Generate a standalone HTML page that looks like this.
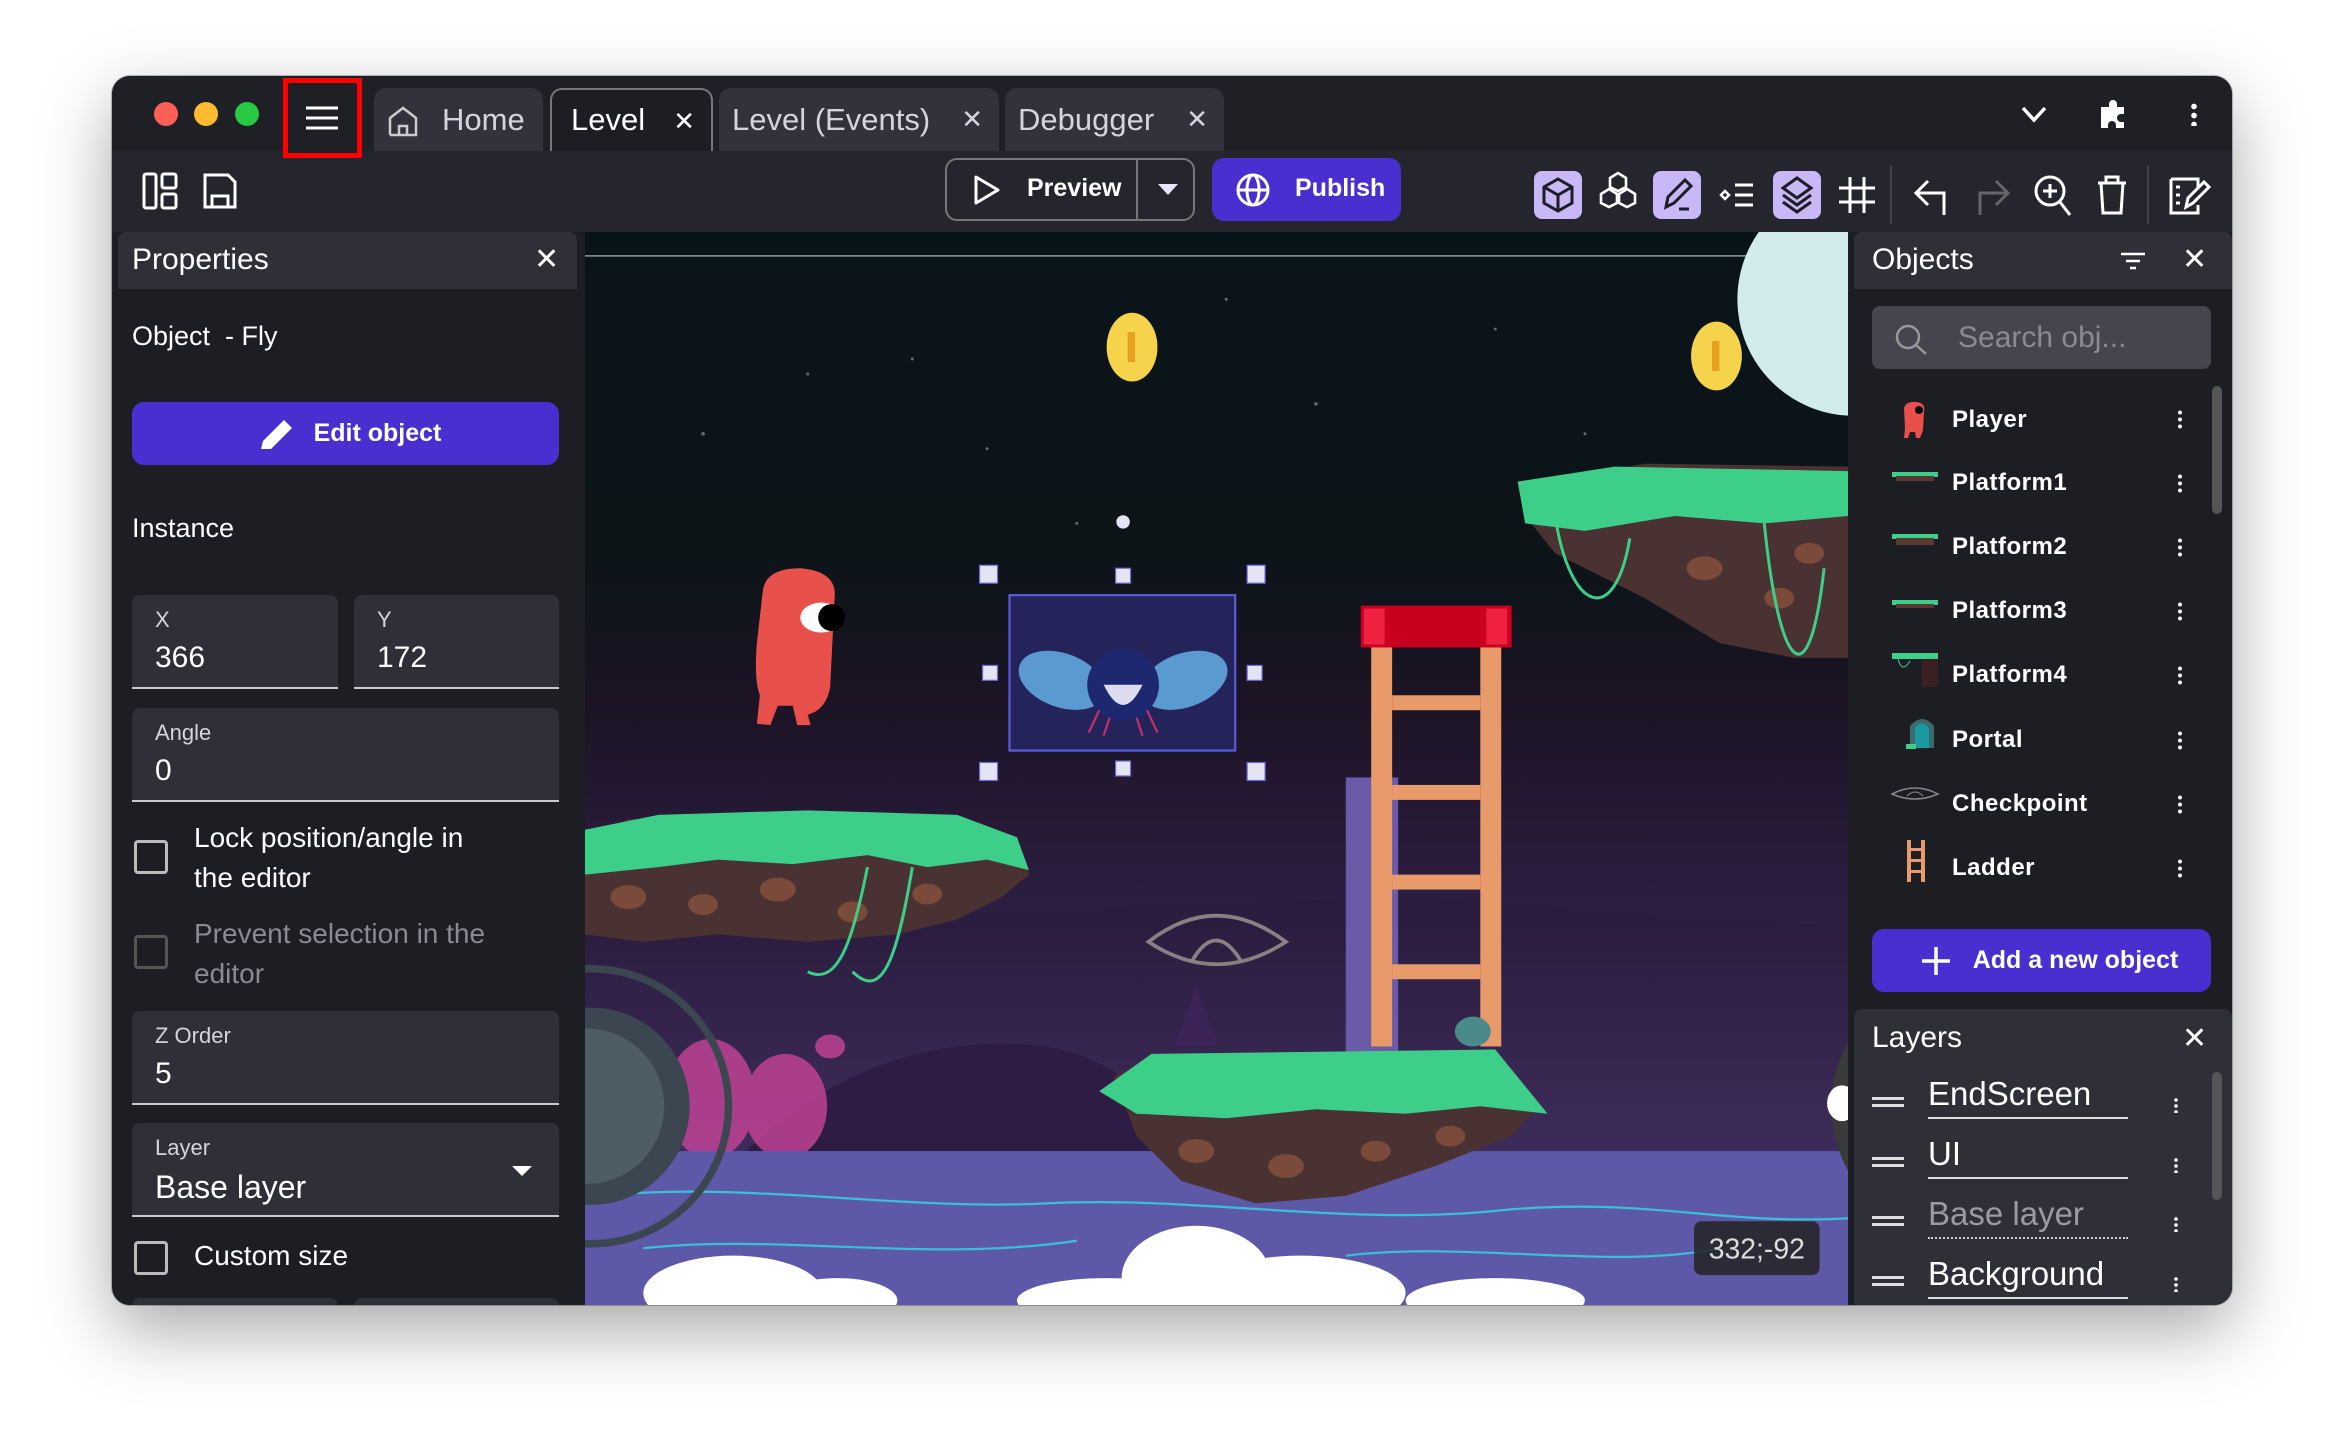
<!DOCTYPE html>
<html><head><meta charset="utf-8"><style>
*{box-sizing:border-box;margin:0;padding:0}
body{width:2344px;height:1454px;background:#fff;position:relative;overflow:hidden;font-family:"Liberation Sans",sans-serif;color:#fff}
.a{position:absolute}
.win{left:112px;top:76px;width:2120px;height:1229px;border-radius:18px;background:#1d1d24;overflow:hidden;box-shadow:0 25px 70px rgba(0,0,0,.35),0 0 0 1px rgba(0,0,0,.25)}
.tab{top:12px;height:63px;background:#32323c;border-radius:12px 12px 0 0;font-size:31px;color:#d4d4da;line-height:63px}
.tab .x{position:absolute;right:16px;top:0;font-size:26px}
.fld{background:#2f2f38;border-bottom:2px solid #c9c9cf;border-radius:8px 8px 0 0}
.fld .l{position:absolute;left:23px;top:12px;font-size:22px;color:#d4d4da}
.fld .v{position:absolute;left:23px;top:46px;font-size:30px}
.cb{width:34px;height:34px;border:3px solid #bbb;border-radius:4px}
.obj{left:98px;font-size:24px;font-weight:bold;letter-spacing:.5px}
.dots{width:4px;height:20px;background:radial-gradient(circle,#fff 1.8px,transparent 2.2px) 0 0/4px 7px repeat-y}
.btn{background:#4a2fd0;border-radius:12px;font-weight:bold;font-size:25px;text-align:center}
.lay{left:56px;font-size:33px;border-bottom:2px solid #ddd;width:200px;height:44px}
</style></head><body>
<div class="a win">
 <div class="a" style="left:0;top:0;width:2120px;height:75px;background:#1f1f26"></div>
 <div class="a" style="left:42px;top:26px;width:24px;height:24px;border-radius:50%;background:#fe5f57"></div>
 <div class="a" style="left:82px;top:26px;width:24px;height:24px;border-radius:50%;background:#febc2e"></div>
 <div class="a" style="left:123px;top:26px;width:24px;height:24px;border-radius:50%;background:#28c840"></div>
 <div class="a tab" style="left:262px;width:169px"><svg class="a" style="left:12px;top:17px" width="34" height="32"><path d="M4 30V13L17 3L30 13V30H4M13 30V21H21V30" stroke="#ccc" stroke-width="2.5" fill="none"/></svg><span style="position:absolute;left:68px">Home</span></div>
 <div class="a tab" style="left:438px;width:163px;background:#1d1d24;border:2px solid #777;border-bottom:none;color:#fff"><span style="position:absolute;left:19px;top:-2px">Level</span><span class="x">✕</span></div>
 <div class="a tab" style="left:607px;width:280px"><span style="position:absolute;left:13px">Level (Events)</span><span class="x">✕</span></div>
 <div class="a tab" style="left:893px;width:219px"><span style="position:absolute;left:13px">Debugger</span><span class="x">✕</span></div>
 <svg class="a" style="left:1907px;top:26px" width="30" height="24"><path d="M4 6L15 18L26 6" stroke="#fff" stroke-width="3.5" fill="none"/></svg>
 <svg class="a" style="left:1986px;top:20px" width="34" height="34"><path d="M3 11H11V8A4 4 0 0 1 19 8V11H26V18H23A4 4 0 0 0 23 26H26V32H18V29A4 4 0 0 0 10 29V32H3Z" fill="#fff"/></svg>
 <div class="a dots" style="left:2079px;top:26px;height:24px;width:6px;background:radial-gradient(circle,#fff 2.6px,transparent 3px) 0 0/6px 9px repeat-y"></div>
 <div class="a" style="left:0;top:75px;width:2120px;height:81px;background:#25252d"></div>
 <div class="a" style="left:171px;top:2px;width:79px;height:80px;border:5px solid #f00;background:#1f1f26;z-index:5"></div>
 <svg class="a" style="left:190px;top:24px;z-index:6" width="40" height="36"><path d="M4 8H36M4 18H36M4 28H36" stroke="#fff" stroke-width="3"/></svg>
 <svg class="a" style="left:30px;top:96px" width="36" height="38"><g stroke="#fff" stroke-width="3" fill="none"><rect x="2" y="2" width="12" height="34" rx="2"/><rect x="20" y="2" width="14" height="14" rx="2"/><rect x="20" y="22" width="14" height="14" rx="2"/></g></svg>
 <svg class="a" style="left:90px;top:96px" width="36" height="38"><path d="M3 3H26L33 10V35H3ZM10 35V24H26V35" stroke="#fff" stroke-width="3" fill="none"/></svg>
 <div class="a" style="left:833px;top:82px;width:250px;height:63px;border:2px solid #777;border-radius:12px"></div>
 <div class="a" style="left:1024px;top:82px;width:2px;height:63px;background:#777"></div>
 <svg class="a" style="left:860px;top:98px" width="30" height="32"><path d="M4 3L26 16L4 29Z" stroke="#fff" stroke-width="3" fill="none" stroke-linejoin="round"/></svg>
 <div class="a" style="left:915px;top:98px;font-size:25px;font-weight:bold">Preview</div>
 <svg class="a" style="left:1044px;top:105px" width="24" height="16"><path d="M2 3H22L12 14Z" fill="#e8e4ff"/></svg>
 <div class="a btn" style="left:1100px;top:82px;width:189px;height:63px"></div>
 <svg class="a" style="left:1123px;top:96px" width="36" height="36"><g stroke="#fff" stroke-width="3" fill="none"><circle cx="18" cy="18" r="15"/><ellipse cx="18" cy="18" rx="6" ry="15"/><path d="M3 18H33"/></g></svg>
 <div class="a" style="left:1183px;top:98px;font-size:25px;font-weight:bold">Publish</div>
 <div class="a" style="left:1422px;top:95px;width:48px;height:48px;border-radius:8px;background:#c8b8f8"></div>
 <div class="a" style="left:1541px;top:95px;width:48px;height:48px;border-radius:8px;background:#c8b8f8"></div>
 <div class="a" style="left:1661px;top:95px;width:48px;height:48px;border-radius:8px;background:#c8b8f8"></div>
 <svg class="a" style="left:1422px;top:95px" width="48" height="48"><path d="M24 8L38 16V32L24 40L10 32V16ZM10 16L24 24L38 16M24 24V40" stroke="#1d1d24" stroke-width="3" fill="none"/></svg>
 <svg class="a" style="left:1480px;top:93px" width="52" height="52"><g stroke="#fff" stroke-width="2.6" fill="none"><path d="M26 4L34 9V18L26 22L18 18V9Z"/><path d="M17 20L25 25V34L17 38L9 34V25Z"/><path d="M35 20L43 25V34L35 38L27 34V25Z"/></g></svg>
 <svg class="a" style="left:1541px;top:95px" width="48" height="48"><path d="M13 36L15 26L32 9L38 15L21 32ZM26 38H36" stroke="#1d1d24" stroke-width="3" fill="none"/></svg>
 <svg class="a" style="left:1601px;top:95px" width="48" height="48"><path d="M8 24L12 20L16 24L12 28Z" stroke="#fff" stroke-width="2.5" fill="none"/><path d="M22 14H40M22 24H40M22 34H40" stroke="#fff" stroke-width="3"/></svg>
 <svg class="a" style="left:1661px;top:95px" width="48" height="48"><path d="M24 7L38 17L24 27L10 17ZM10 24L24 34L38 24M10 31L24 41L38 31" stroke="#1d1d24" stroke-width="3" fill="none"/></svg>
 <svg class="a" style="left:1721px;top:95px" width="48" height="48"><path d="M17 6V42M31 6V42M6 17H42M6 31H42" stroke="#fff" stroke-width="3"/></svg>
 <div class="a" style="left:1778px;top:90px;width:2px;height:58px;background:#444"></div>
 <svg class="a" style="left:1798px;top:95px" width="44" height="48"><path d="M34 44V22H8M18 10L6 22L18 34" stroke="#fff" stroke-width="3" fill="none"/></svg>
 <svg class="a" style="left:1858px;top:95px" width="44" height="48"><path d="M10 44V22H36M26 10L38 22L26 34" stroke="#666" stroke-width="3" fill="none"/></svg>
 <svg class="a" style="left:1918px;top:95px" width="44" height="48"><g stroke="#fff" stroke-width="3" fill="none"><circle cx="20" cy="20" r="14"/><path d="M30 31L40 44M20 13V27M13 20H27"/></g></svg>
 <svg class="a" style="left:1980px;top:95px" width="40" height="48"><path d="M6 12H34M14 12V6H26V12M9 12L11 42H29L31 12" stroke="#fff" stroke-width="3" fill="none"/></svg>
 <div class="a" style="left:2035px;top:90px;width:2px;height:58px;background:#444"></div>
 <svg class="a" style="left:2054px;top:95px" width="46" height="48"><path d="M5 8H32V18M5 8V42H32V34M10 16H14M10 24H14M10 32H14M20 36L22 27L38 11L43 16L27 32Z" stroke="#fff" stroke-width="3" fill="none"/></svg>

 <div class="a" style="left:6px;top:156px;width:459px;height:1073px;background:#1d1d24"></div>
 <div class="a" style="left:6px;top:156px;width:459px;height:57px;background:#2f2f38;border-radius:8px 8px 0 0"></div>
 <div class="a" style="left:20px;top:167px;font-size:30px">Properties</div>
 <div class="a" style="left:422px;top:166px;font-size:30px">✕</div>
 <div class="a" style="left:20px;top:245px;font-size:27px">Object &nbsp;- Fly</div>
 <div class="a btn" style="left:20px;top:326px;width:427px;height:63px;line-height:63px"><span style="margin-left:64px">Edit object</span></div>
 <svg class="a" style="left:145px;top:340px" width="40" height="36"><path d="M4 33L6 25L27 4L35 12L14 33Z" fill="#fff"/></svg>
 <div class="a" style="left:20px;top:437px;font-size:27px">Instance</div>
 <div class="a fld" style="left:20px;top:519px;width:206px;height:94px"><span class="l">X</span><span class="v">366</span></div>
 <div class="a fld" style="left:242px;top:519px;width:205px;height:94px"><span class="l">Y</span><span class="v">172</span></div>
 <div class="a fld" style="left:20px;top:632px;width:427px;height:94px"><span class="l">Angle</span><span class="v">0</span></div>
 <div class="a cb" style="left:22px;top:764px"></div>
 <div class="a" style="left:82px;top:742px;font-size:28px;line-height:40px">Lock position/angle in<br>the editor</div>
 <div class="a cb" style="left:22px;top:859px;border-color:#555"></div>
 <div class="a" style="left:82px;top:838px;font-size:28px;line-height:40px;color:#8a8a94">Prevent selection in the<br>editor</div>
 <div class="a fld" style="left:20px;top:935px;width:427px;height:94px"><span class="l">Z Order</span><span class="v">5</span></div>
 <div class="a fld" style="left:20px;top:1047px;width:427px;height:94px"><span class="l">Layer</span><span class="v" style="font-size:32px">Base layer</span></div>
 <svg class="a" style="left:398px;top:1088px" width="24" height="14"><path d="M2 2H22L12 12Z" fill="#fff"/></svg>
 <div class="a cb" style="left:22px;top:1165px"></div>
 <div class="a" style="left:82px;top:1164px;font-size:28px">Custom size</div>
 <div class="a fld" style="left:20px;top:1222px;width:206px;height:30px"></div>
 <div class="a fld" style="left:242px;top:1222px;width:205px;height:30px"></div>

 <svg class="a" style="left:473px;top:156px" width="1263" height="1073" viewBox="391 155 845 718" preserveAspectRatio="none">
  <defs><linearGradient id="bg" x1="0" y1="0" x2="0" y2="1"><stop offset="0" stop-color="#09141a"/><stop offset=".3" stop-color="#0c1418"/><stop offset=".45" stop-color="#1d1426"/><stop offset=".65" stop-color="#2e1f44"/><stop offset=".82" stop-color="#4c3870"/><stop offset="1" stop-color="#5e4a8e"/></linearGradient></defs>
  <rect x="391" y="155" width="845" height="718" fill="url(#bg)"/>
  <g fill="#9aa" opacity=".6"><circle cx="470" cy="290" r="1.2"/><circle cx="540" cy="250" r="1"/><circle cx="610" cy="240" r="1"/><circle cx="880" cy="270" r="1.2"/><circle cx="1060" cy="290" r="1"/><circle cx="660" cy="300" r="1"/><circle cx="720" cy="350" r="1"/><circle cx="1000" cy="220" r="1"/><circle cx="820" cy="200" r="1"/></g>
  <line x1="391" y1="171" x2="1236" y2="171" stroke="#8a9a9a" stroke-width="1"/>
  <circle cx="1240" cy="200" r="78" fill="#d2ecee"/>
  <ellipse cx="757" cy="232" rx="17" ry="23" fill="#f5d34a"/><rect x="754" y="222" width="5" height="20" fill="#e8a020"/>
  <ellipse cx="1148" cy="238" rx="17" ry="23" fill="#f5d34a"/><rect x="1145" y="228" width="5" height="20" fill="#e8a020"/>
  <path d="M390 620L940 600L1236 620V873H390Z" fill="#2a1c3c" opacity=".5"/>
  <rect x="900" y="520" width="35" height="190" fill="#6a5aa8"/>
  <path d="M480 790C540 720 620 690 700 700C760 710 790 760 840 790Z" fill="#2e1c44"/>
  <path d="M785 700L800 660L815 700Z" fill="#3c2458"/>
  <g fill="#c8449a" opacity=".8"><ellipse cx="475" cy="735" rx="30" ry="40"/><ellipse cx="525" cy="740" rx="28" ry="35"/><ellipse cx="555" cy="700" rx="10" ry="8"/></g>
  <rect x="390" y="770" width="846" height="103" fill="#5e58a8"/>
  <g stroke="#3ac0d8" stroke-width="1.5" fill="none"><path d="M400 800C500 790 600 810 700 805S900 820 1000 810S1150 820 1236 815"/><path d="M430 835C520 825 620 845 720 830"/><path d="M900 840C980 830 1080 850 1150 835"/></g>
  <g fill="#fff"><ellipse cx="490" cy="865" rx="60" ry="25"/><ellipse cx="560" cy="870" rx="40" ry="15"/><ellipse cx="800" cy="855" rx="50" ry="35"/><ellipse cx="870" cy="865" rx="70" ry="25"/><ellipse cx="740" cy="870" rx="60" ry="15"/><ellipse cx="1000" cy="870" rx="60" ry="15"/></g>
  <circle cx="395" cy="740" r="92" fill="none" stroke="#3c4650" stroke-width="5"/>
  <circle cx="395" cy="740" r="66" fill="#3c4650"/><circle cx="392" cy="740" r="52" fill="#4e5c66"/>
  <circle cx="1315" cy="740" r="90" fill="#3a3a3a"/><circle cx="1315" cy="740" r="80" fill="#2e2e2e"/><ellipse cx="1232" cy="738" rx="10" ry="12" fill="#fff"/>
  <path d="M391 560L420 548L540 545L640 548L680 560L688 585L670 600L640 615L600 625L540 630L480 625L430 630L391 625Z" fill="#4a3232"/>
  <path d="M391 555L440 545L540 542L640 545L680 560L688 582L660 575L620 580L580 572L530 578L480 575L440 580L391 585Z" fill="#3dce8a"/>
  <g fill="#7a4a3a"><ellipse cx="420" cy="600" rx="12" ry="8"/><ellipse cx="470" cy="605" rx="10" ry="7"/><ellipse cx="520" cy="595" rx="12" ry="8"/><ellipse cx="570" cy="610" rx="10" ry="7"/><ellipse cx="620" cy="598" rx="10" ry="7"/></g>
  <path d="M580 580C570 630 560 660 540 650M610 580C600 640 590 670 570 650" stroke="#3dce8a" stroke-width="2" fill="none"/>
  <path d="M1020 325L1100 310L1236 312V440L1200 440L1150 430L1100 400L1040 370L1020 345Z" fill="#4a3232"/>
  <path d="M1015 322L1080 312L1236 315V345L1180 350L1120 345L1060 355L1020 350Z" fill="#3dce8a"/>
  <g fill="#7a4a3a"><ellipse cx="1140" cy="380" rx="12" ry="8"/><ellipse cx="1190" cy="400" rx="10" ry="7"/><ellipse cx="1210" cy="370" rx="10" ry="7"/></g>
  <path d="M1040 345C1050 410 1080 420 1090 360M1180 350C1190 450 1210 470 1220 380" stroke="#3dce8a" stroke-width="2" fill="none"/>
  <rect x="917" y="430" width="14" height="270" fill="#e89a6a"/><rect x="990" y="430" width="14" height="270" fill="#e89a6a"/>
  <g fill="#e89a6a"><rect x="931" y="465" width="59" height="10"/><rect x="931" y="525" width="59" height="10"/><rect x="931" y="585" width="59" height="10"/><rect x="931" y="645" width="59" height="10"/></g>
  <rect x="910" y="405" width="101" height="28" fill="#c8001e"/><rect x="912" y="407" width="14" height="24" fill="#f02040"/><rect x="994" y="407" width="14" height="24" fill="#f02040"/>
  <path d="M745 720L780 705L1000 705L1030 740L1010 760L960 780L900 800L840 805L790 790L760 760Z" fill="#4a3232"/>
  <path d="M735 730L770 705L1000 702L1035 745L990 740L940 745L880 742L820 748L760 745Z" fill="#3dce8a"/>
  <g fill="#7a4a3a"><ellipse cx="800" cy="770" rx="12" ry="8"/><ellipse cx="860" cy="780" rx="12" ry="8"/><ellipse cx="920" cy="770" rx="10" ry="7"/><ellipse cx="970" cy="760" rx="10" ry="7"/></g>
  <ellipse cx="985" cy="690" rx="12" ry="10" fill="#4a8a8a"/>
  <path d="M768 630Q813 595 860 630Q813 660 768 630Z" stroke="#8a8080" stroke-width="2.5" fill="none"/><path d="M797 643Q813 615 830 643" stroke="#8a8080" stroke-width="2.5" fill="none"/>
  <path d="M510 395Q512 380 535 380Q560 382 558 400L555 460Q552 475 540 478L542 485L533 485L530 472L520 472L515 485L506 484L508 465Q504 455 506 430Z" fill="#e8504c"/>
  <ellipse cx="549" cy="413" rx="14" ry="10" fill="#fff"/><circle cx="556" cy="413" r="9" fill="#000"/>
  <rect x="675" y="398" width="151" height="104" fill="#24245a" stroke="#5a5ad8" stroke-width="1.5"/>
  <ellipse cx="710" cy="455" rx="30" ry="18" fill="#5a9ad0" transform="rotate(20 710 455)"/><ellipse cx="792" cy="455" rx="30" ry="18" fill="#5a9ad0" transform="rotate(-20 792 455)"/>
  <circle cx="751" cy="458" r="24" fill="#1e2870"/><path d="M738 458Q751 485 764 458Z" fill="#dcdcf0"/>
  <path d="M735 475L728 490M767 475L774 490M742 480L738 492M760 480L764 492" stroke="#c0306a" stroke-width="1.5"/>
  <g fill="#e4e4f4" stroke="#6a6ad8" stroke-width=".8"><rect x="655" y="378" width="12" height="12"/><rect x="746" y="380" width="10" height="10"/><rect x="834" y="378" width="12" height="12"/><rect x="657" y="445" width="10" height="10"/><rect x="834" y="445" width="10" height="10"/><rect x="655" y="510" width="12" height="12"/><rect x="746" y="509" width="10" height="10"/><rect x="834" y="510" width="12" height="12"/></g>
  <circle cx="751" cy="349" r="4.5" fill="#e4e4f4"/>
  <rect x="1133" y="817" width="84" height="36" rx="5" fill="#222" opacity=".85"/>
  <text x="1175" y="842" fill="#ddd" font-size="19" text-anchor="middle" font-family="Liberation Sans">332;-92</text>
 </svg>

 <div class="a" style="left:1736px;top:156px;width:384px;height:1073px;background:#1d1d24"></div>
 <div class="a" style="left:1742px;top:156px;width:378px;height:57px;background:#2f2f38;border-radius:8px 8px 0 0"></div>
 <div class="a" style="left:1760px;top:167px;font-size:30px">Objects</div>
 <svg class="a" style="left:2006px;top:174px" width="30" height="24"><path d="M3 4H27M8 11H22M12 18H18" stroke="#fff" stroke-width="2.5"/></svg>
 <div class="a" style="left:2070px;top:166px;font-size:30px">✕</div>
 <div class="a" style="left:1760px;top:230px;width:339px;height:63px;background:#45454f;border-radius:8px"></div>
 <svg class="a" style="left:1782px;top:247px" width="36" height="34"><circle cx="14" cy="14" r="11" stroke="#999" stroke-width="2.5" fill="none"/><path d="M22 22L32 31" stroke="#999" stroke-width="2.5"/></svg>
 <div class="a" style="left:1846px;top:245px;font-size:30px;color:#8a8a94">Search obj...</div>
 <div class="a" style="left:2100px;top:310px;width:10px;height:128px;background:#555;border-radius:5px"></div>
 <svg class="a" style="left:1784px;top:322px" width="40" height="44"><path d="M8 10Q10 3 20 4Q30 5 28 14L27 32L24 40L20 40L19 34L14 34L12 40L8 40L9 30Z" fill="#e8504c"/><circle cx="23" cy="12" r="4" fill="#000"/></svg>
 <svg class="a" style="left:1778px;top:388px" width="50" height="24"><rect x="2" y="8" width="46" height="5" fill="#3dce8a"/><rect x="6" y="12" width="38" height="5" fill="#5a3a30"/></svg>
 <svg class="a" style="left:1778px;top:452px" width="50" height="24"><rect x="2" y="6" width="46" height="5" fill="#3dce8a"/><rect x="6" y="10" width="38" height="7" fill="#5a3a30"/></svg>
 <svg class="a" style="left:1778px;top:516px" width="50" height="24"><rect x="2" y="8" width="46" height="5" fill="#3dce8a"/><rect x="6" y="12" width="38" height="4" fill="#5a3a30"/></svg>
 <svg class="a" style="left:1778px;top:573px" width="50" height="40"><rect x="2" y="4" width="46" height="6" fill="#3dce8a"/><rect x="32" y="10" width="16" height="28" fill="#3a2020"/><path d="M8 10Q12 25 20 12" stroke="#3dce8a" fill="none"/></svg>
 <svg class="a" style="left:1792px;top:634px" width="36" height="40"><path d="M6 38V16Q18 2 30 16V38Z" fill="#3a6a70"/><path d="M11 38V18Q18 9 25 18V38Z" fill="#1a9aa0"/><rect x="2" y="34" width="10" height="5" fill="#3dce8a"/></svg>
 <svg class="a" style="left:1778px;top:708px" width="50" height="20"><path d="M2 10Q25 -2 48 10Q25 20 2 10Z" stroke="#888" stroke-width="1.5" fill="none"/><path d="M17 12Q25 4 33 12" stroke="#888" fill="none"/></svg>
 <svg class="a" style="left:1792px;top:762px" width="26" height="46"><g fill="#e89a6a"><rect x="3" y="2" width="4" height="42"/><rect x="17" y="2" width="4" height="42"/><rect x="7" y="10" width="10" height="3"/><rect x="7" y="21" width="10" height="3"/><rect x="7" y="32" width="10" height="3"/></g></svg>
 <div class="a obj" style="top:330px;left:1840px">Player</div>
 <div class="a obj" style="top:393px;left:1840px">Platform1</div>
 <div class="a obj" style="top:457px;left:1840px">Platform2</div>
 <div class="a obj" style="top:521px;left:1840px">Platform3</div>
 <div class="a obj" style="top:585px;left:1840px">Platform4</div>
 <div class="a obj" style="top:650px;left:1840px">Portal</div>
 <div class="a obj" style="top:714px;left:1840px">Checkpoint</div>
 <div class="a obj" style="top:778px;left:1840px">Ladder</div>
 <div class="a dots" style="left:2066px;top:333px"></div>
 <div class="a dots" style="left:2066px;top:397px"></div>
 <div class="a dots" style="left:2066px;top:461px"></div>
 <div class="a dots" style="left:2066px;top:525px"></div>
 <div class="a dots" style="left:2066px;top:589px"></div>
 <div class="a dots" style="left:2066px;top:654px"></div>
 <div class="a dots" style="left:2066px;top:718px"></div>
 <div class="a dots" style="left:2066px;top:782px"></div>
 <div class="a btn" style="left:1760px;top:853px;width:339px;height:63px;line-height:63px"><span style="margin-left:68px">Add a new object</span></div>
 <svg class="a" style="left:1808px;top:869px" width="32" height="32"><path d="M16 2V30M2 16H30" stroke="#fff" stroke-width="3.5"/></svg>
 <div class="a" style="left:1742px;top:933px;width:378px;height:296px;background:#2f2f38;border-radius:8px 8px 0 0"></div>
 <div class="a" style="left:1760px;top:945px;font-size:30px">Layers</div>
 <div class="a" style="left:2070px;top:945px;font-size:30px">✕</div>
 <div class="a" style="left:2100px;top:996px;width:10px;height:128px;background:#555;border-radius:5px"></div>
 <div class="a" style="left:1760px;top:1009px;width:320px;height:220px">
  <div class="a" style="left:0;top:12px;width:32px;height:10px;border-top:3px solid #ddd;border-bottom:3px solid #ddd"></div>
  <div class="a" style="left:0;top:72px;width:32px;height:10px;border-top:3px solid #ddd;border-bottom:3px solid #ddd"></div>
  <div class="a" style="left:0;top:131px;width:32px;height:10px;border-top:3px solid #ddd;border-bottom:3px solid #ddd"></div>
  <div class="a" style="left:0;top:191px;width:32px;height:10px;border-top:3px solid #ddd;border-bottom:3px solid #ddd"></div>
  <div class="a lay" style="top:-10px">EndScreen</div>
  <div class="a lay" style="top:50px">UI</div>
  <div class="a lay" style="top:110px;color:#9a9aa4;border-bottom:2px dotted #ccc">Base layer</div>
  <div class="a lay" style="top:170px">Background</div>
  <div class="a dots" style="left:302px;top:12px;height:16px;width:4px;background:radial-gradient(circle,#fff 1.6px,transparent 2px) 0 0/4px 6px repeat-y"></div>
  <div class="a dots" style="left:302px;top:72px;height:16px;width:4px;background:radial-gradient(circle,#fff 1.6px,transparent 2px) 0 0/4px 6px repeat-y"></div>
  <div class="a dots" style="left:302px;top:131px;height:16px;width:4px;background:radial-gradient(circle,#fff 1.6px,transparent 2px) 0 0/4px 6px repeat-y"></div>
  <div class="a dots" style="left:302px;top:191px;height:16px;width:4px;background:radial-gradient(circle,#fff 1.6px,transparent 2px) 0 0/4px 6px repeat-y"></div>
 </div>
</div>
</body></html>
